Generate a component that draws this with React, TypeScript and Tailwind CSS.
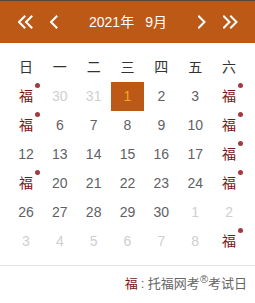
import React from "react"

type Cell = { label: string; other?: boolean; fu?: boolean; dot?: boolean; active?: boolean }

const weekdays = ["日", "一", "二", "三", "四", "五", "六"]

const rows: Cell[][] = [
  [{ label: "29", fu: true, dot: true }, { label: "30", other: true }, { label: "31", other: true }, { label: "1", active: true }, { label: "2" }, { label: "3" }, { label: "4", fu: true, dot: true }],
  [{ label: "5", fu: true, dot: true }, { label: "6" }, { label: "7" }, { label: "8" }, { label: "9" }, { label: "10" }, { label: "11", fu: true, dot: true }],
  [{ label: "12" }, { label: "13" }, { label: "14" }, { label: "15" }, { label: "16" }, { label: "17" }, { label: "18", fu: true, dot: true }],
  [{ label: "19", fu: true, dot: true }, { label: "20" }, { label: "21" }, { label: "22" }, { label: "23" }, { label: "24" }, { label: "25", fu: true, dot: true }],
  [{ label: "26" }, { label: "27" }, { label: "28" }, { label: "29" }, { label: "30" }, { label: "1", other: true }, { label: "2", other: true }],
  [{ label: "3", other: true }, { label: "4", other: true }, { label: "5", other: true }, { label: "6", other: true }, { label: "7", other: true }, { label: "8", other: true }, { label: "9", fu: true, dot: true }],
]

const Chevron = ({ dir, double }: { dir: "left" | "right"; double?: boolean }) => {
  const w = double ? 15 : 8
  const pts = (x: number) =>
    dir === "left" ? `${x + 6.5},1.5 ${x + 1},7 ${x + 6.5},12.5` : `${x + 1},1.5 ${x + 6.5},7 ${x + 1},12.5`
  return (
    <svg width={w} height={14} viewBox={`0 0 ${w} 14`} fill="none" stroke="white" strokeWidth={2} strokeLinecap="square">
      <polyline points={pts(0)} />
      {double && <polyline points={pts(7)} />}
    </svg>
  )
}

const App = () => {
  return (
    <div className="w-[255px] h-[303px] bg-white font-['Liberation_Sans','Noto_Sans_CJK_SC',sans-serif] overflow-hidden">
      <div className="h-[43px] bg-[#bc5917] border-t border-[#5a4535] flex items-center pl-[18px] pr-[17px]">
        <Chevron dir="left" double />
        <div className="ml-[17px]">
          <Chevron dir="left" />
        </div>
        <div className="flex-1 flex justify-center text-white text-[14px]">
          <span>2021年</span>
          <span className="ml-[11px]">9月</span>
        </div>
        <div className="mr-[17px]">
          <Chevron dir="right" />
        </div>
        <Chevron dir="right" double />
      </div>

      <div className="px-[9px] mt-[10px]">
        <div className="grid grid-cols-7">
          {weekdays.map(d => (
            <div key={d} className="h-[29px] flex items-center justify-center text-[14px] text-[#333]">
              {d}
            </div>
          ))}
        </div>
        {rows.map((row, i) => (
          <div key={i} className="grid grid-cols-7">
            {row.map((c, j) => (
              <div
                key={j}
                className={`relative h-[29px] flex items-center justify-center text-[14px] ${
                  c.active ? "bg-[#bc5917] text-[#f5a623]" : c.fu ? "text-[#7a1616]" : c.other ? "text-[#cfcfcf]" : "text-[#5f5f66]"
                }`}
              >
                {c.fu ? "福" : c.label}
                {c.dot && <span className="absolute top-[1px] right-[3px] w-[5px] h-[5px] rounded-full bg-[#a23a3e]" />}
              </div>
            ))}
          </div>
        ))}
      </div>

      <div className="mt-[9px] border-t border-[#e5e5e5] h-[37px] flex items-center justify-end pr-[8px] text-[13px] text-[#666]">
        <span className="text-[#7a1616]">福</span>
        <span className="ml-[3px]">: 托福网考</span>
        <sup className="text-[11px] -top-[5px]">®</sup>
        <span>考试日</span>
      </div>
    </div>
  )
}

export default App
